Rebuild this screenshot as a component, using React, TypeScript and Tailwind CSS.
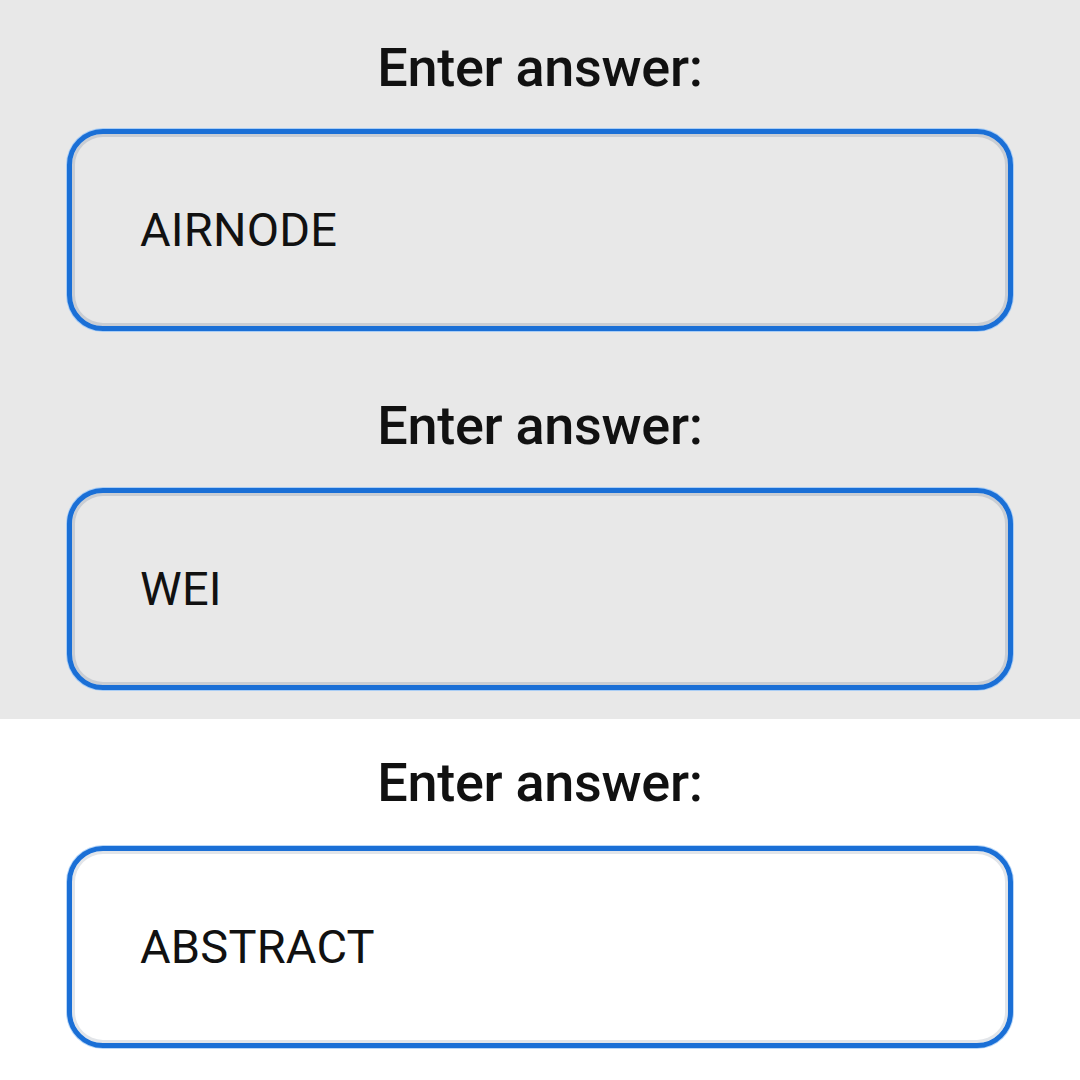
import React from "react";

type Item = { value: string };

function AnswerField({ value, tone, boxGap }: { value: string; tone: "gray" | "white"; boxGap: string }) {
  const box =
    tone === "gray"
      ? "bg-[#e8e8e8] shadow-[inset_0_0_0_3px_#c9cdd3,0_0_0_1px_#a9cdf5]"
      : "bg-white shadow-[inset_0_0_0_3px_#e2e5e9,0_0_0_1px_#b9d7f8]";
  return (
    <div className="flex flex-col items-center">
      <div className="h-[64px] leading-[64px] text-[54px] font-medium text-[#111] tracking-[-0.3px]">
        Enter answer:
      </div>
      <div
        className={`${boxGap} w-[946px] h-[202px] rounded-[36px] border-[5px] border-[#1a6fd6] flex items-center pl-[68px] ${box}`}
      >
        <span className="text-[47px] text-[#111] tracking-[0.2px]">{value}</span>
      </div>
    </div>
  );
}

const items: Item[] = [{ value: "AIRNODE" }, { value: "WEI" }, { value: "ABSTRACT" }];

export default function App() {
  return (
    <div className="w-[1080px] h-[1080px] overflow-hidden bg-white font-['Roboto',_sans-serif]">
      <div className="bg-[#e8e8e8] pt-[36px] pb-[29px] flex flex-col gap-[63px]">
        <AnswerField value={items[0].value} tone="gray" boxGap="mt-[29px]" />
        <AnswerField value={items[1].value} tone="gray" boxGap="mt-[30px]" />
      </div>
      <div className="pt-[32px]">
        <AnswerField value={items[2].value} tone="white" boxGap="mt-[31px]" />
      </div>
    </div>
  );
}
